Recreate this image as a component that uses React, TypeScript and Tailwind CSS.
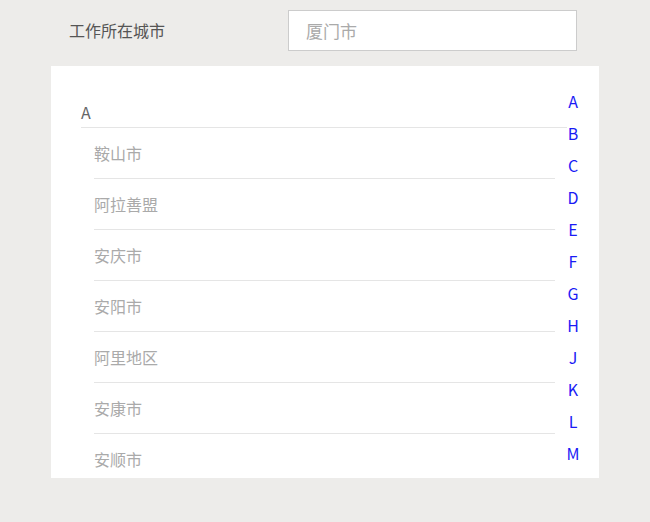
import React from "react";

const CITIES = ["鞍山市", "阿拉善盟", "安庆市", "安阳市", "阿里地区", "安康市", "安顺市"];
const LETTERS = ["A", "B", "C", "D", "E", "F", "G", "H", "J", "K", "L", "M"];

const font = { fontFamily: '"Noto Sans CJK SC", "Noto Sans", sans-serif' };

export default function App() {
  return (
    <div className="h-[522px] w-[650px] overflow-hidden bg-[#edecea]" style={font}>
      {/* city field */}
      <div className="flex h-[66px] items-start pt-[10px]">
        <label className="ml-[69px] w-[219px] pt-[9px] text-[16px] leading-[22px] text-[#555]">
          工作所在城市
        </label>
        <div className="flex h-[41px] w-[289px] items-center border border-[#ccc] bg-white pl-[17px] text-[17px] text-[#aaa]">
          厦门市
        </div>
      </div>

      {/* city list */}
      <div className="relative ml-[51px] h-[412px] w-[548px] overflow-hidden bg-white">
        <div className="ml-[30px] mr-[32px] border-b border-[#e5e5e5] pt-[36px] pb-[5px] text-[16px] leading-[20px] text-[#666]">
          A
        </div>
        <ul className="ml-[43px] mr-[44px]">
          {CITIES.map((c) => (
            <li
              key={c}
              className="flex h-[51px] items-center border-b border-[#e5e5e5] text-[16px] text-[#aaa]"
            >
              {c}
            </li>
          ))}
        </ul>

        <ul className="absolute left-[512px] top-[19px] w-[20px] text-center">
          {LETTERS.map((l) => (
            <li key={l} className="text-[16px] leading-[32px] text-[#1a1af5]">
              {l}
            </li>
          ))}
        </ul>
      </div>
    </div>
  );
}
